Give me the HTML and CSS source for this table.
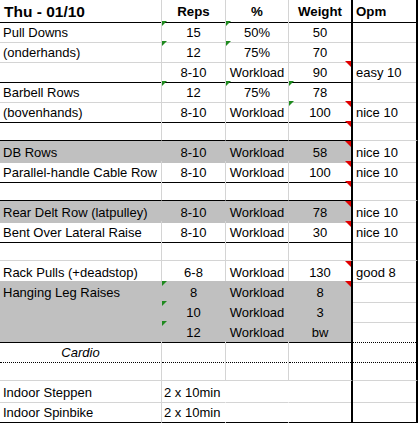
FILE: index.html
```html
<!DOCTYPE html>
<html>
<head>
<meta charset="utf-8">
<link rel="stylesheet" href="styles.css">
</head>
<body>
<div class="sheet">
  <div class="row hdr">
    <div class="c a title">Thu - 01/10</div>
    <div class="c b">Reps</div>
    <div class="c cc">%</div>
    <div class="c d">Weight</div>
    <div class="c e">Opm</div>
  </div>
  <div class="row">
    <div class="c a">Pull Downs</div>
    <div class="c b g">15</div>
    <div class="c cc g">50%</div>
    <div class="c d">50</div>
    <div class="c e"></div>
  </div>
  <div class="row">
    <div class="c a">(onderhands)</div>
    <div class="c b g">12</div>
    <div class="c cc g">75%</div>
    <div class="c d">70</div>
    <div class="c e"></div>
  </div>
  <div class="row blk">
    <div class="c a"></div>
    <div class="c b">8-10</div>
    <div class="c cc">Workload</div>
    <div class="c d r">90</div>
    <div class="c e">easy 10</div>
  </div>
  <div class="row">
    <div class="c a">Barbell Rows</div>
    <div class="c b g">12</div>
    <div class="c cc g">75%</div>
    <div class="c d g">78</div>
    <div class="c e"></div>
  </div>
  <div class="row blk">
    <div class="c a">(bovenhands)</div>
    <div class="c b">8-10</div>
    <div class="c cc">Workload</div>
    <div class="c d g r">100</div>
    <div class="c e">nice 10</div>
  </div>
  <div class="row blk">
    <div class="c a"></div>
    <div class="c b"></div>
    <div class="c cc"></div>
    <div class="c d r"></div>
    <div class="c e"></div>
  </div>
  <div class="row gray">
    <div class="c a">DB Rows</div>
    <div class="c b">8-10</div>
    <div class="c cc">Workload</div>
    <div class="c d r">58</div>
    <div class="c e">nice 10</div>
  </div>
  <div class="row blk">
    <div class="c a">Parallel-handle Cable Row</div>
    <div class="c b">8-10</div>
    <div class="c cc">Workload</div>
    <div class="c d r">100</div>
    <div class="c e">nice 10</div>
  </div>
  <div class="row blk">
    <div class="c a"></div>
    <div class="c b"></div>
    <div class="c cc"></div>
    <div class="c d r"></div>
    <div class="c e"></div>
  </div>
  <div class="row gray">
    <div class="c a">Rear Delt Row (latpulley)</div>
    <div class="c b">8-10</div>
    <div class="c cc">Workload</div>
    <div class="c d r">78</div>
    <div class="c e">nice 10</div>
  </div>
  <div class="row blk">
    <div class="c a">Bent Over Lateral Raise</div>
    <div class="c b">8-10</div>
    <div class="c cc">Workload</div>
    <div class="c d r">30</div>
    <div class="c e">nice 10</div>
  </div>
  <div class="row">
    <div class="c a"></div>
    <div class="c b"></div>
    <div class="c cc"></div>
    <div class="c d"></div>
    <div class="c e"></div>
  </div>
  <div class="row blk">
    <div class="c a">Rack Pulls (+deadstop)</div>
    <div class="c b">6-8</div>
    <div class="c cc">Workload</div>
    <div class="c d r">130</div>
    <div class="c e">good 8</div>
  </div>
  <div class="row gray">
    <div class="c a">Hanging Leg Raises</div>
    <div class="c b g">8</div>
    <div class="c cc">Workload</div>
    <div class="c d r">8</div>
    <div class="c e"></div>
  </div>
  <div class="row gray">
    <div class="c a"></div>
    <div class="c b g">10</div>
    <div class="c cc">Workload</div>
    <div class="c d">3</div>
    <div class="c e"></div>
  </div>
  <div class="row gray blk edot">
    <div class="c a"></div>
    <div class="c b g">12</div>
    <div class="c cc">Workload</div>
    <div class="c d">bw</div>
    <div class="c e"></div>
  </div>
  <div class="row dot">
    <div class="c a cardio">Cardio</div>
    <div class="c b"></div>
    <div class="c cc"></div>
    <div class="c d"></div>
    <div class="c e"></div>
  </div>
  <div class="row">
    <div class="c a"></div>
    <div class="c b"></div>
    <div class="c cc"></div>
    <div class="c d"></div>
    <div class="c e"></div>
  </div>
  <div class="row span">
    <div class="c a">Indoor Steppen</div>
    <div class="c b">2 x 10min</div>
    <div class="c cc"></div>
    <div class="c d"></div>
    <div class="c e"></div>
  </div>
  <div class="row span last">
    <div class="c a">Indoor Spinbike</div>
    <div class="c b">2 x 10min</div>
    <div class="c cc"></div>
    <div class="c d"></div>
    <div class="c e"></div>
  </div>
</div>
</body>
</html>
```
FILE: styles.css
```css
html, body {
  margin: 0;
  padding: 0;
  background: #fff;
}

.sheet {
  width: 418px;
  font-family: "Liberation Sans", Arial, sans-serif;
  font-size: 13px;
  color: #000;
}

.row {
  display: grid;
  grid-template-columns: 162px 64px 63px 64px 65px;
  height: 20px;
}

.c {
  box-sizing: border-box;
  position: relative;
  border-right: 1px solid #d4d4d4;
  border-bottom: 1px solid #d4d4d4;
  padding-top: 2px;
  line-height: 19px;
  text-align: center;
  white-space: nowrap;
}

.a {
  text-align: left;
  padding-left: 3px;
}

.d {
  border-right: 2px solid #000;
}

.e {
  border-right: 2px solid #000;
  text-align: left;
  padding-left: 3px;
}

/* header */
.hdr {
  height: 21px;
}
.hdr .c {
  font-weight: bold;
  font-size: 13.3px;
  line-height: 20px;
  border-bottom-color: #000;
}
.hdr .title {
  font-size: 15.5px;
  padding-left: 4px;
}

/* gray filled rows */
.gray .a,
.gray .b,
.gray .cc,
.gray .d {
  background: #c0c0c0;
  border-bottom-color: #c0c0c0;
}
.gray .a,
.gray .b,
.gray .cc {
  border-right-color: #c0c0c0;
}

/* black bottom borders across A-D */
.blk .a,
.blk .b,
.blk .cc,
.blk .d {
  border-bottom-color: #000;
}

.edot .e {
  border-bottom: 1px dotted #000;
}

.dot .c {
  border-bottom: 1px dotted #000;
}

.cardio {
  font-style: italic;
  text-align: center;
  padding-left: 0;
}

.span .b,
.span .cc {
  border-right-color: transparent;
}
.span .b {
  text-align: left;
  padding-left: 2px;
}

.last {
  height: 22px;
}
.last .c {
  border-bottom: 2px solid #000;
}

/* cell indicators */
.g::before {
  content: "";
  position: absolute;
  left: 0;
  top: 0;
  border-top: 5px solid #1f8a1f;
  border-right: 5px solid transparent;
}

.r::after {
  content: "";
  position: absolute;
  right: 0;
  top: 0;
  border-top: 6px solid #e00000;
  border-left: 6px solid transparent;
}
```
